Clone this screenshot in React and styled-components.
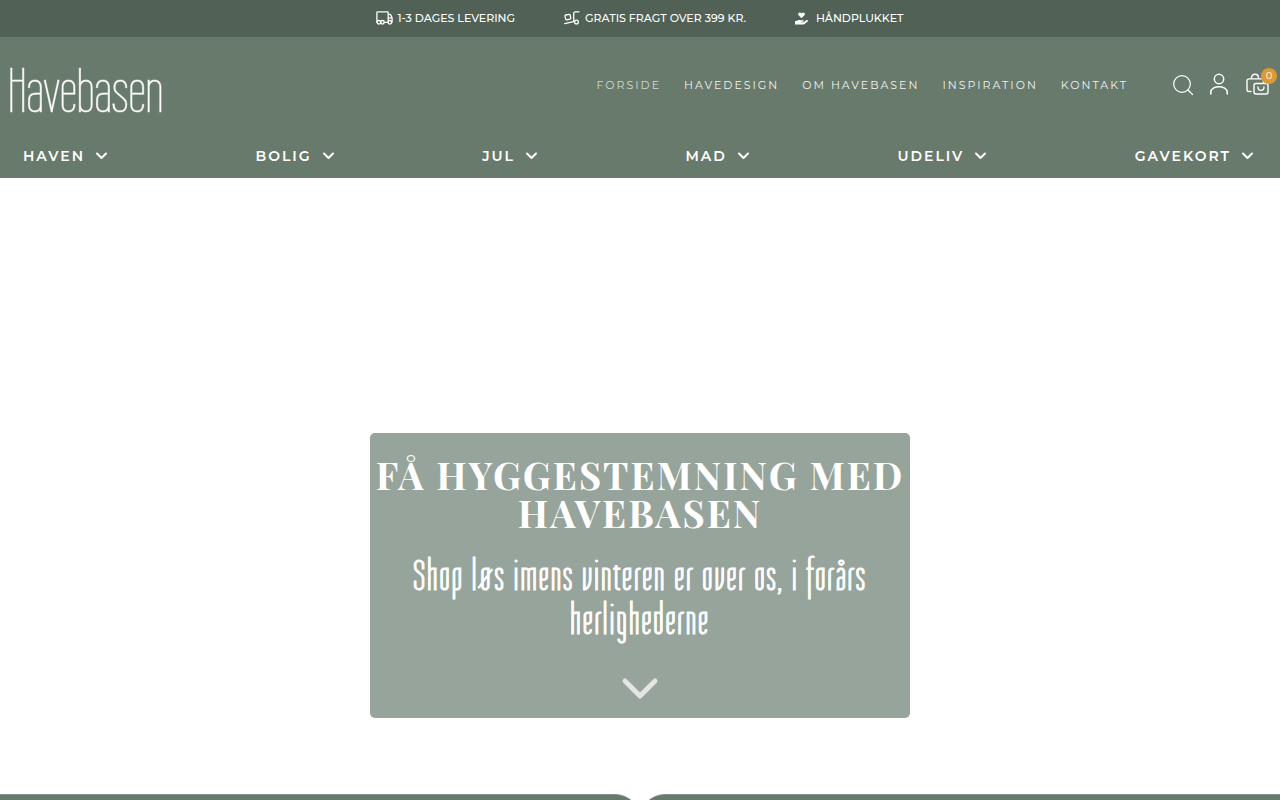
import React from "react";
import styled, { createGlobalStyle } from "styled-components";

const sans = 'Montserrat, Inter, "Liberation Sans", sans-serif';

const GlobalStyle = createGlobalStyle`
  *, *::before, *::after { box-sizing: border-box; }
  body { margin: 0; background: #fff; color: #fff; font-family: ${sans}; }
  a { color: inherit; text-decoration: none; }
  button { padding: 0; border: 0; background: none; color: inherit; font: inherit; cursor: pointer; }
  ul { margin: 0; padding: 0; list-style: none; }
  svg { display: block; flex: none; }
`;

const UspBar = styled.ul`
  display: flex;
  justify-content: center;
  gap: 49px;
  height: 37px;
  padding-bottom: 1px;
  align-items: center;
  background: #516156;
`;

const Usp = styled.li`
  display: flex;
  align-items: center;
  gap: ${(p) => p.$gap || 4}px;
  font-size: 11px;
  font-weight: 500;
  line-height: 16px;
`;

const Header = styled.header`
  background: #687a6c;
`;

const TopRow = styled.div`
  display: flex;
  align-items: center;
  height: 97px;
  padding: 0 11px 2px 8px;
`;

const Logo = styled.a`
  margin-right: auto;
  padding-top: 12px;
  font-family: "Wire One", Lato, sans-serif;
  font-weight: 400;
  font-size: 63px;
  line-height: 60px;
  -webkit-text-stroke: 1px rgba(255, 255, 255, 0.5);
`;

const TopLinks = styled.ul`
  display: flex;
  gap: 23px;
  margin-right: 44px;
  font-size: 11px;
  line-height: 16px;
  letter-spacing: 2px;
`;

const TopLink = styled.a`
  opacity: ${(p) => (p.$current ? 0.7 : 0.9)};
`;

const Tools = styled.div`
  display: flex;
  align-items: center;
  gap: 16px;
`;

const Tool = styled.button`
  position: relative;
`;

const Badge = styled.span`
  position: absolute;
  top: -5px;
  right: -8px;
  width: 16px;
  height: 16px;
  border-radius: 50%;
  background: #dd9933;
  font-size: 10px;
  line-height: 16px;
  text-align: center;
`;

const MainNav = styled.ul`
  display: flex;
  justify-content: space-between;
  align-items: center;
  height: 44px;
  padding: 0 26px 0 23px;
`;

const MainLink = styled.button`
  display: flex;
  align-items: center;
  gap: 10px;
  font-size: 14px;
  font-weight: 600;
  line-height: 20px;
  letter-spacing: 2px;
`;

const Hero = styled.section`
  display: flex;
  justify-content: center;
  align-items: flex-end;
  min-height: calc(100vh - 184px);
  padding-bottom: 76px;
`;

const HeroCard = styled.div`
  display: flex;
  flex-direction: column;
  align-items: center;
  width: 540px;
  max-width: 100%;
  padding: 23px 0 18px;
  border-radius: 5px;
  background: #97a49b;
  text-align: center;
`;

const Title = styled.h1`
  margin: 0;
  font-family: "Playfair Display", "Liberation Serif", serif;
  font-size: 38px;
  font-weight: 700;
  line-height: 38px;
  letter-spacing: 2px;
`;

const Lead = styled.p`
  margin: 22px 0 35px;
  padding: 0 24px;
  font-family: "Tulpen One", "Liberation Sans Narrow", "Liberation Sans", sans-serif;
  font-size: 44px;
  line-height: 44px;
  letter-spacing: 2px;
  -webkit-text-stroke: 1px #fff;
`;

const Cards = styled.div`
  display: grid;
  grid-template-columns: 1fr 1fr;
`;

const Card = styled.section`
  min-height: 320px;
  border-top: 1px solid #82918a;
  border-radius: ${(p) => (p.$first ? "0 25px 0 0" : "25px 0 0 0")};
  background: #687a6c;
`;

const Stroke = ({ w, h, box, width = 1.5, children }) => (
  <svg width={w} height={h} viewBox={box || `0 0 ${w} ${h}`} fill="none" stroke="currentColor" strokeWidth={width} strokeLinecap="round" strokeLinejoin="round" aria-hidden="true">
    {children}
  </svg>
);

const TruckIcon = () => (
  <Stroke w={17} h={14} width={1.3}>
    <path d="M.9 11V1.6q0-.8.8-.8h9.7q.8 0 .8.8V11M12.2 3.3h1.6q.6 0 .9.6l1.4 2.8V11M12.4 6.8H16M8.2 11.4h3" />
    <circle cx="2.9" cy="11.3" r="1.8" />
    <circle cx="6.5" cy="11.3" r="1.8" />
    <circle cx="13.8" cy="11.3" r="1.8" />
  </Stroke>
);

const TrolleyIcon = () => (
  <Stroke w={17} h={14} width={1.3}>
    <path d="M15 .8h-3.6q-1.7 0-1.7 1.7v7.7M.8 12.6l9.6-2.2M1 5.2q-.2-1 .8-1.2l3.2-.7q.9-.1 1.1.7l.7 3q.2 1-.8 1.2l-3.2.7q-.9.1-1.1-.7z" />
    <circle cx="12.5" cy="11" r="1.9" />
  </Stroke>
);

const HandHeartIcon = () => (
  <svg width="13" height="13" viewBox="0 0 13 13" fill="currentColor" aria-hidden="true">
    <path d="M6.5 6.2 3.6 3.3C1.9 1.3 4.9-.9 6.5 1.3 8.1-.9 11.1 1.3 9.4 3.3zM0 9h1.7c1.8-1.5 3-1.1 4.3-.7h2c1 0 1 1.5 0 1.5H6v.4h2.6l2.7-2c1-.7 2.2.4 1.4 1.3L9.6 12q-.4.4-1 .4H0z" />
  </svg>
);

const SearchIcon = () => (
  <Stroke w={21} h={22} width={1.2}>
    <circle cx="10" cy="10" r="8.3" />
    <path d="m16 16 4.5 4.5" />
  </Stroke>
);

const UserIcon = () => (
  <Stroke w={20} h={24}>
    <circle cx="10" cy="6" r="4.7" />
    <path d="M1.8 21v-1.8c0-7.4 16.4-7.4 16.4 0V21" />
  </Stroke>
);

const BagIcon = () => (
  <Stroke w={24} h={24} width={1.4}>
    <path d="M6 18.5H4a2 2 0 0 1-2-2V7.9a2 2 0 0 1 2-2h12.500a2 2 0 0 1 2 2v2.100M6.500 5.700v-.9c0-4.800 7-4.800 7 0v.9" />
    <rect x="9" y="10.500" width="14" height="10.500" rx="2" />
    <path d="M13 14c0 4.500 6 4.500 6 0" />
  </Stroke>
);

const ChevronIcon = () => (
  <Stroke w={13} h={8} width={2}>
    <path d="m2 1.5 4.5 4.5L11 1.5" />
  </Stroke>
);

const topLinks = ["FORSIDE", "HAVEDESIGN", "OM HAVEBASEN", "INSPIRATION", "KONTAKT"];
const mainLinks = ["HAVEN", "BOLIG", "JUL", "MAD", "UDELIV", "GAVEKORT"];

export default function App() {
  return (
    <>
      <GlobalStyle />
      <UspBar>
        <Usp><TruckIcon />1-3 DAGES LEVERING</Usp>
        <Usp><TrolleyIcon />GRATIS FRAGT OVER 399 KR.</Usp>
        <Usp $gap={8}><HandHeartIcon />HÅNDPLUKKET</Usp>
      </UspBar>
      <Header>
        <TopRow>
          <Logo href="#">Havebasen</Logo>
          <nav>
            <TopLinks>
              {topLinks.map((label, i) => (
                <li key={label}><TopLink href="#" $current={i === 0}>{label}</TopLink></li>
              ))}
            </TopLinks>
          </nav>
          <Tools>
            <Tool aria-label="Søg"><SearchIcon /></Tool>
            <Tool aria-label="Konto"><UserIcon /></Tool>
            <Tool aria-label="Kurv"><BagIcon /><Badge>0</Badge></Tool>
          </Tools>
        </TopRow>
        <nav>
          <MainNav>
            {mainLinks.map((label) => (
              <li key={label}><MainLink>{label}<ChevronIcon /></MainLink></li>
            ))}
          </MainNav>
        </nav>
      </Header>
      <main>
        <Hero>
          <HeroCard>
            <Title>FÅ HYGGESTEMNING MED HAVEBASEN</Title>
            <Lead>Shop løs imens vinteren er over os, i forårs herlighederne</Lead>
            <button aria-label="Rul ned">
              <Stroke w={38} h={23} width={5}>
                <path d="m4 4 15 15L34 4" stroke="#e3e6e4" />
              </Stroke>
            </button>
          </HeroCard>
        </Hero>
        <Cards>
          <Card $first />
          <Card />
        </Cards>
      </main>
    </>
  );
}
